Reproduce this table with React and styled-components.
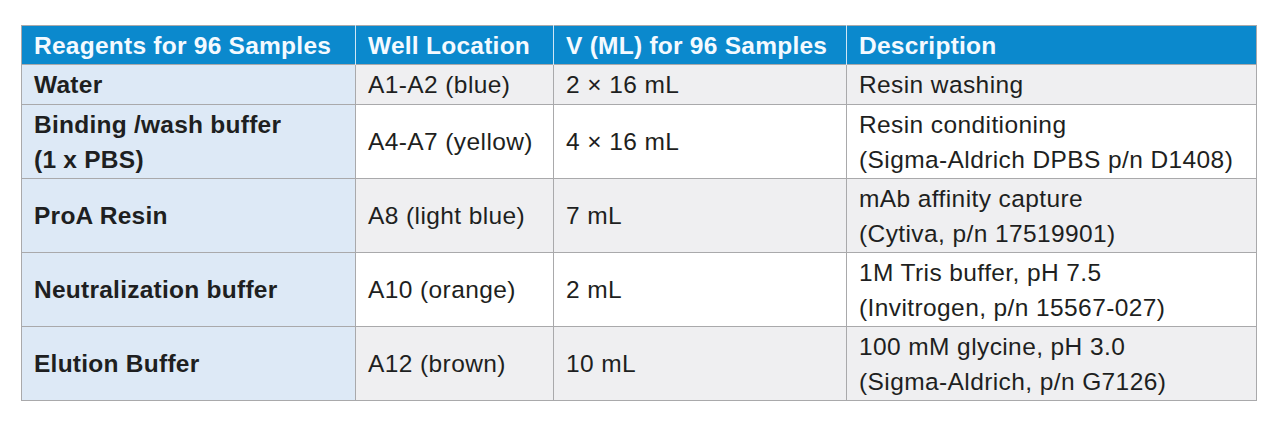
import React from 'react';
import styled, { createGlobalStyle } from 'styled-components';

/* ================= DATA ================= */

const HEADERS = [
    "Reagents for 96 Samples",
    "Well Location",
    "V (ML) for 96 Samples",
    "Description"
];

const ROWS = [
    {
        reagent: ["Water"],
        well: "A1-A2 (blue)",
        volume: "2 × 16 mL",
        description: ["Resin washing"]
    },
    {
        reagent: ["Binding /wash buffer", "(1 x PBS)"],
        well: "A4-A7 (yellow)",
        volume: "4 × 16 mL",
        description: ["Resin conditioning", "(Sigma-Aldrich DPBS p/n D1408)"]
    },
    {
        reagent: ["ProA Resin"],
        well: "A8 (light blue)",
        volume: "7 mL",
        description: ["mAb affinity capture", "(Cytiva, p/n 17519901)"]
    },
    {
        reagent: ["Neutralization buffer"],
        well: "A10 (orange)",
        volume: "2 mL",
        description: ["1M Tris buffer, pH 7.5", "(Invitrogen, p/n 15567-027)"]
    },
    {
        reagent: ["Elution Buffer"],
        well: "A12 (brown)",
        volume: "10 mL",
        description: ["100 mM glycine, pH 3.0", "(Sigma-Aldrich, p/n G7126)"]
    }
];

const COL_WIDTHS = [334, 198, 293, 410];

/* ================= STYLES ================= */

const GlobalStyle = createGlobalStyle`
    body {
        margin: 0;
        background: #fff;
        font-family: "Liberation Sans", Arial, sans-serif;
    }
`;

const Page = styled.div`
    padding: 25px 0 0 21px;
`;

const Table = styled.table`
    border-collapse: collapse;
    table-layout: fixed;
    width: 1235px;
    border: 1.5px solid #a9a9ab;
    color: #1e1f21;
    font-size: 24.5px;
    letter-spacing: 0.4px;
`;

const HeadCell = styled.th`
    background: #0b89cd;
    color: #f4faff;
    font-weight: 700;
    letter-spacing: 0.25px;
    text-align: left;
    padding: 1px 12px 0;
    height: 37px;
    border-left: 1.5px solid #cfe6f5;

    &:first-child {
        border-left: none;
    }
`;

const Row = styled.tr`
    background: ${({ $striped }) => ($striped ? '#efeff1' : '#ffffff')};
`;

const Cell = styled.td`
    padding: 1px 12px;
    line-height: 35px;
    height: ${({ $tall }) => ($tall ? '71px' : '37px')};
    border: 1.5px solid #a9a9ab;
    vertical-align: middle;
    white-space: nowrap;
`;

const ReagentCell = styled(Cell)`
    background: #dde9f6;
    font-weight: 700;
    letter-spacing: 0.25px;
`;

const Line = styled.div`
    display: block;
`;

const App = () => {
    return (
        <>
            <GlobalStyle />
            <Page>
                <Table>
                    <colgroup>
                        {COL_WIDTHS.map((w, i) => (
                            <col key={i} style={{ width: w }} />
                        ))}
                    </colgroup>
                    <thead>
                        <tr>
                            {HEADERS.map((h) => (
                                <HeadCell key={h}>{h}</HeadCell>
                            ))}
                        </tr>
                    </thead>
                    <tbody>
                        {ROWS.map((row, i) => {
                            const tall = row.description.length > 1 || row.reagent.length > 1;

                            return (
                                <Row key={row.well} $striped={i % 2 === 0}>
                                    <ReagentCell $tall={tall}>
                                        {row.reagent.map((l) => <Line key={l}>{l}</Line>)}
                                    </ReagentCell>
                                    <Cell $tall={tall}>{row.well}</Cell>
                                    <Cell $tall={tall}>{row.volume}</Cell>
                                    <Cell $tall={tall}>
                                        {row.description.map((l) => <Line key={l}>{l}</Line>)}
                                    </Cell>
                                </Row>
                            );
                        })}
                    </tbody>
                </Table>
            </Page>
        </>
    );
};

export default App;
